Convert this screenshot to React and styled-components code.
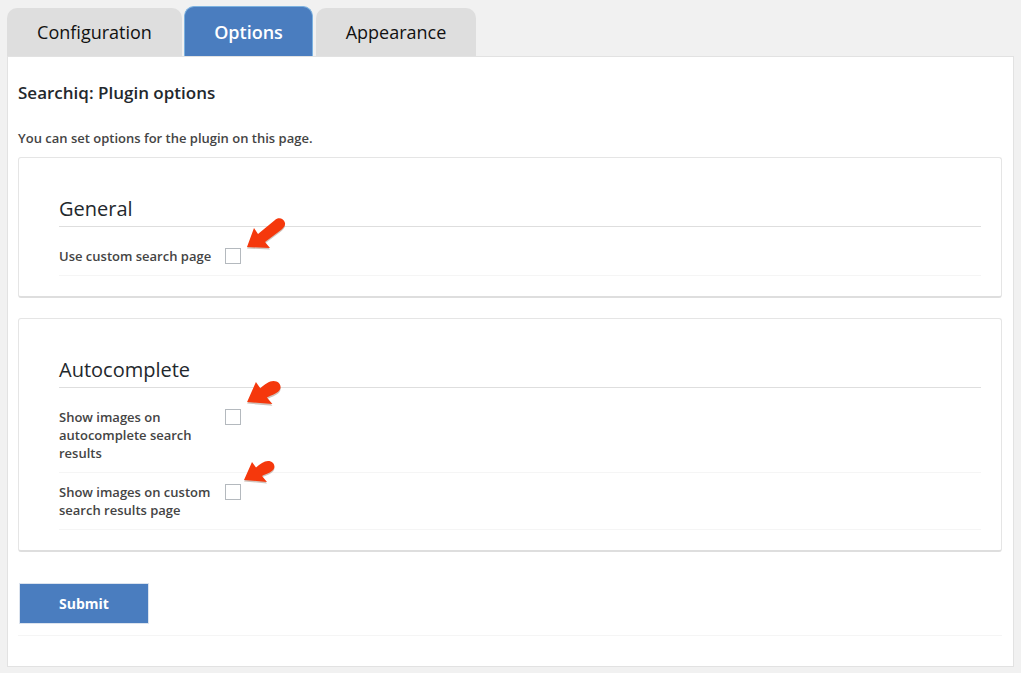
import React from 'react'
import styled, { createGlobalStyle } from 'styled-components'

const GlobalStyle = createGlobalStyle`
  html, body {
    margin: 0;
    padding: 0;
    background: #f1f1f1;
    font-family: "Open Sans", "Liberation Sans", sans-serif;
    color: #444;
  }
`

const Page = styled.div`
  width: 1021px;
  height: 673px;
  padding: 6px 7px 6px;
  box-sizing: border-box;
  overflow: hidden;
`

const Tabs = styled.div`
  display: flex;
  align-items: flex-end;
  height: 50px;
`

const Tab = styled.div`
  box-sizing: border-box;
  width: ${(p) => p.$width}px;
  margin-right: ${(p) => p.$gap}px;
  height: ${(p) => (p.$active ? 50 : 48)}px;
  display: flex;
  align-items: center;
  justify-content: center;
  border-radius: 10px 10px 0 0;
  font-size: 18px;
  background: ${(p) => (p.$active ? '#4a7dbf' : '#dedede')};
  color: ${(p) => (p.$active ? '#fff' : '#111')};
  font-weight: ${(p) => (p.$active ? 600 : 400)};
  border: ${(p) => (p.$active ? '1px solid #7db2e0' : 'none')};
  border-bottom: none;
`

const Panel = styled.div`
  box-sizing: border-box;
  height: 611px;
  background: #fff;
  border: 1px solid #e2e2e2;
  padding: 0 11px 0 10px;
`

const Title = styled.h2`
  margin: 0;
  padding-top: 25px;
  font-size: 17px;
  line-height: 22px;
  font-weight: 600;
  color: #23282d;
`

const Intro = styled.p`
  margin: 0;
  padding-top: 25px;
  font-size: 13px;
  line-height: 18px;
  font-weight: 600;
  color: #444;
`

const Card = styled.section`
  position: relative;
  box-sizing: border-box;
  height: ${(p) => p.$height}px;
  margin-top: ${(p) => p.$top}px;
  background: #fff;
  border: 1px solid #e5e5e5;
  border-bottom: 2px solid #dedede;
  border-radius: 3px;
  padding: 37px 20px 0 40px;
`

const CardHeading = styled.h3`
  margin: 0;
  height: 31px;
  font-size: 20px;
  line-height: 28px;
  font-weight: 400;
  color: #23282d;
  border-bottom: 1px solid #dedede;
`

const Row = styled.div`
  box-sizing: border-box;
  display: flex;
  align-items: flex-start;
  height: ${(p) => p.$height}px;
  padding-top: ${(p) => p.$pad}px;
  border-bottom: 1px solid #f5f5f5;
`

const Label = styled.label`
  width: 166px;
  font-size: 13px;
  line-height: 18px;
  font-weight: 600;
  color: #444;
  margin-top: -1px;
`

const Check = styled.span`
  box-sizing: border-box;
  display: block;
  width: 16px;
  height: 16px;
  background: #fff;
  border: 1px solid #b4b9be;
  flex: none;
`

const ArrowMark = styled.svg`
  position: absolute;
  left: ${(p) => p.$x}px;
  top: ${(p) => p.$y}px;
  overflow: visible;
`

const Footer = styled.div`
  box-sizing: border-box;
  height: 84px;
  padding-top: 31px;
  border-bottom: 1px solid #f5f5f5;
`

const Submit = styled.button`
  display: block;
  box-sizing: border-box;
  width: 130px;
  height: 41px;
  margin-left: 1px;
  background: #4a7dbf;
  border: 1px solid #dbe3ee;
  color: #fff;
  font-family: inherit;
  font-size: 14px;
  font-weight: 700;
`

const LONG_ARROW = 'M2 30 L9 11 L13 17 L30 3 C33 0 39 1 40 6 C40.5 9 38 11.5 36 13 L20 25 L25 31 Z'
const SHORT_ARROW = 'M1 19 L9 1 L13 6.5 C17 3 21 0 25 0 C30 0 32.5 4 31 7.5 C29.5 11 24 12.5 19 15 L24 21 Z'

const Arrow = ({ x, y, d, scale = 1 }) => (
  <ArrowMark $x={x} $y={y} width={40 * scale} height={34 * scale} viewBox="0 0 40 34">
    <path d={d} fill="#8a6a58" opacity="0.4" transform="translate(0 1.5)" />
    <path d={d} fill="#f5380c" />
  </ArrowMark>
)

const App = () => {
  return (
    <Page>
      <GlobalStyle />
      <Tabs>
        <Tab $width={175} $gap={2}>Configuration</Tab>
        <Tab $width={129} $gap={3} $active>Options</Tab>
        <Tab $width={160} $gap={0}>Appearance</Tab>
      </Tabs>
      <Panel>
        <Title>Searchiq: Plugin options</Title>
        <Intro>You can set options for the plugin on this page.</Intro>
        <Card $height={141} $top={10}>
          <CardHeading>General</CardHeading>
          <Row $height={49} $pad={21}>
            <Label>Use custom search page</Label>
            <Check />
          </Row>
          <Arrow x={226} y={59} d={LONG_ARROW} />
        </Card>
        <Card $height={234} $top={20}>
          <CardHeading>Autocomplete</CardHeading>
          <Row $height={85} $pad={21}>
            <Label>Show images on autocomplete search results</Label>
            <Check />
          </Row>
          <Row $height={57} $pad={11}>
            <Label>Show images on custom search results page</Label>
            <Check />
          </Row>
          <Arrow x={227} y={62} d={SHORT_ARROW} scale={1.1} />
          <Arrow x={224} y={142} d={SHORT_ARROW} />
        </Card>
        <Footer>
          <Submit>Submit</Submit>
        </Footer>
      </Panel>
    </Page>
  )
}

export default App
